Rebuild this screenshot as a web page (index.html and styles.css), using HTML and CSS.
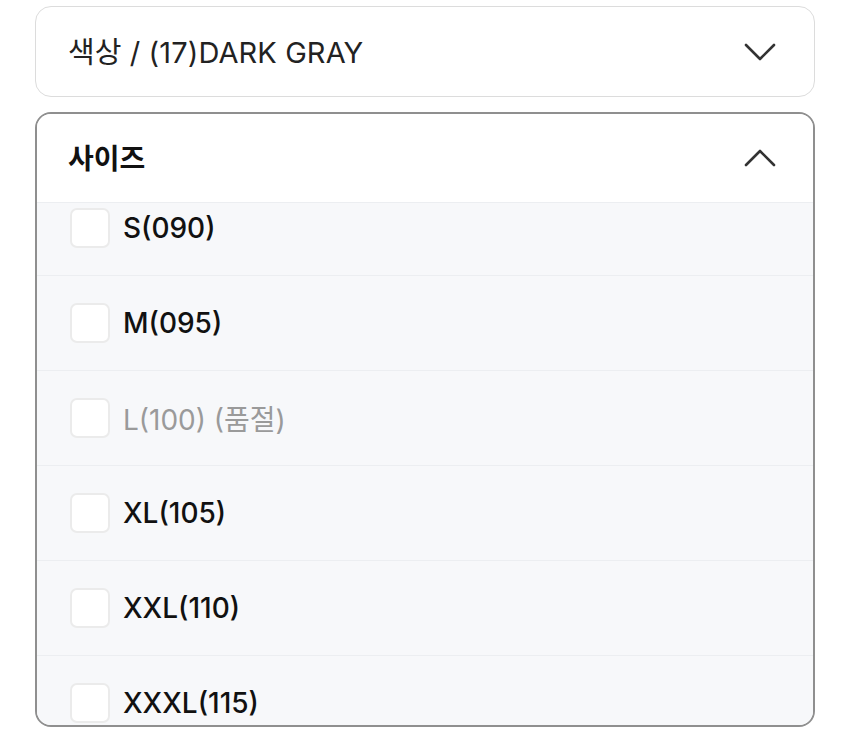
FILE: index.html
```html
<!DOCTYPE html>
<html lang="ko">
<head>
    <meta charset="UTF-8">
    <meta name="viewport" content="width=device-width, initial-scale=1.0">
    <title>옵션 선택</title>
    <link rel="stylesheet" href="styles.css">
</head>
<body>
    <div class="options">
        <div class="select">
            <span class="select-label">색상 / (17)DARK GRAY</span>
            <svg class="chevron" width="32" height="18" viewBox="0 0 32 18">
                <polyline points="2,2 16,16 30,2" fill="none" stroke="#333" stroke-width="2.6" stroke-linecap="round" stroke-linejoin="round"/>
            </svg>
        </div>

        <div class="select open">
            <div class="select-head">
                <span class="select-title">사이즈</span>
                <svg class="chevron" width="32" height="18" viewBox="0 0 32 18">
                    <polyline points="2,16 16,2 30,16" fill="none" stroke="#333" stroke-width="2.6" stroke-linecap="round" stroke-linejoin="round"/>
                </svg>
            </div>
            <div class="select-list">
                <ul class="size-list">
                    <li><span class="check"></span>S(090)</li>
                    <li><span class="check"></span>M(095)</li>
                    <li class="soldout"><span class="check"></span>L(100) (품절)</li>
                    <li><span class="check"></span>XL(105)</li>
                    <li><span class="check"></span>XXL(110)</li>
                    <li><span class="check"></span>XXXL(115)</li>
                </ul>
            </div>
        </div>
    </div>
</body>
</html>
```

FILE: styles.css
```css
body {
    font-family: Inter, "Noto Sans CJK KR", sans-serif;
    margin: 0;
    padding: 0;
    background-color: #fff;
    color: #111;
}
.options {
    padding: 6px 35px 0 35px;
    display: flex;
    flex-direction: column;
    gap: 15px;
}
.select {
    height: 91px;
    box-sizing: border-box;
    border: 1.5px solid #dcdcdc;
    border-radius: 16px;
    display: flex;
    align-items: center;
    justify-content: space-between;
    padding: 0 38px 0 32px;
}
.select-label {
    font-size: 29px;
    color: #222;
    letter-spacing: 0.1px;
    margin-top: -3px;
}
.select.open {
    height: 615px;
    border: 2px solid #8f8f8f;
    padding: 0;
    flex-direction: column;
    align-items: stretch;
    justify-content: flex-start;
    overflow: hidden;
}
.select-head {
    height: 88px;
    flex-shrink: 0;
    display: flex;
    align-items: center;
    justify-content: space-between;
    padding: 0 37px 0 31px;
    border-bottom: 1px solid #eceef1;
    background-color: #fff;
}
.select-title {
    font-size: 28px;
    font-weight: 700;
    color: #111;
    margin-top: -2px;
}
.select-list {
    flex: 1;
    background-color: #f7f8fa;
    overflow: hidden;
}
.size-list {
    list-style: none;
    margin: -22px 0 0 0;
    padding: 0;
}
.size-list li {
    height: 95px;
    box-sizing: border-box;
    display: flex;
    align-items: center;
    gap: 13px;
    padding-left: 33px;
    font-size: 28px;
    font-weight: 500;
    color: #111;
    border-bottom: 1px solid #eceef1;
}
.size-list li.soldout {
    color: #9a9a9a;
    font-weight: 400;
}
.check {
    width: 40px;
    height: 40px;
    box-sizing: border-box;
    border: 2px solid #ebebeb;
    border-radius: 7px;
    background-color: #fff;
    flex-shrink: 0;
}
.chevron {
    display: block;
}
```
